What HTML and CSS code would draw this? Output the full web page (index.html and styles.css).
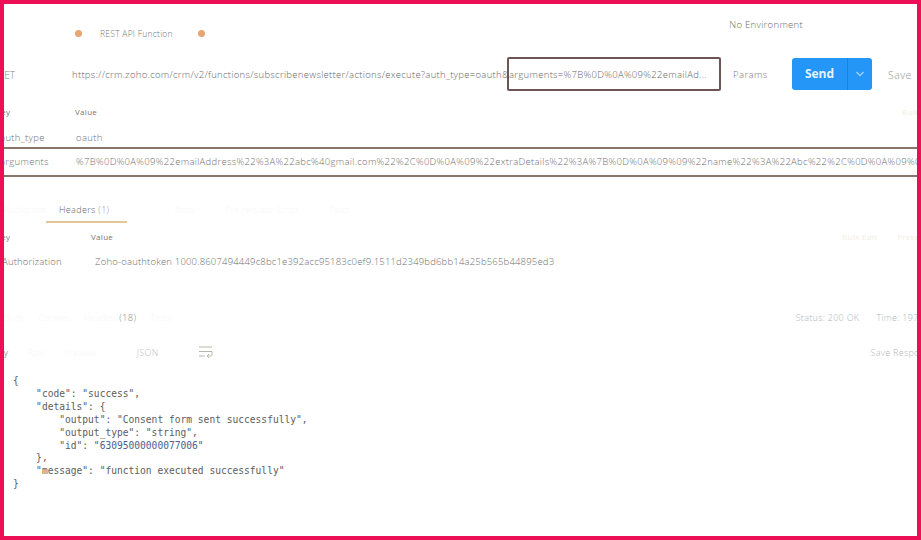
FILE: index.html
```html
<!DOCTYPE html>
<html lang="en">
<head>
<meta charset="utf-8">
<title>REST API Function</title>
<link rel="stylesheet" href="styles.css">
</head>
<body>
<div class="frame">
  <header class="top">
    <div class="tabs">
      <span class="dot"></span><span class="tab-name">REST API Function</span>
      <span class="dot dot-second"></span>
    </div>
    <div class="env">No Environment</div>
  </header>

  <section class="request">
    <span class="method">GET</span>
    <div class="url">https://crm.zoho.com/crm/v2/functions/subscribenewsletter/actions/execute?auth_type=oauth&amp;arguments=%7B%0D%0A%09%22emailAd...<span class="url-mark"></span></div>
    <span class="params">Params</span>
    <div class="send"><span class="send-label">Send</span><span class="send-more"><svg width="10" height="6" viewBox="0 0 10 6"><path d="M1.5 1 5 4.5 8.5 1" fill="none" stroke="#9fd0ff" stroke-width="1.4"/></svg></span></div>
    <span class="save">Save</span>
  </section>

  <div class="kv-head params-head"><span class="k">Key</span><span>Value</span><span class="aside bulk-one">Bulk Edit</span></div>
  <div class="kv-row row-auth"><span class="k">auth_type</span><span>oauth</span></div>
  <div class="kv-row row-args"><span class="k">arguments</span><span class="nowrap">%7B%0D%0A%09%22emailAddress%22%3A%22abc%40gmail.com%22%2C%0D%0A%09%22extraDetails%22%3A%7B%0D%0A%09%09%22name%22%3A%22Abc%22%2C%0D%0A%09%09%22</span></div>

  <nav class="subtabs">
    <span class="faint">Authorization</span>
    <span class="subtab">Headers <span class="count">(1)</span></span>
    <span class="faint">Body</span>
    <span class="faint">Pre-request Script</span>
    <span class="faint">Tests</span>
  </nav>

  <div class="kv-head headers-head"><span class="k">Key</span><span>Value</span><span class="aside">Bulk Edit</span><span class="aside presets">Presets</span></div>
  <div class="kv-row headers-row"><span class="k">Authorization</span><span>Zoho-oauthtoken 1000.8607494449c8bc1e392acc95183c0ef9.1511d2349bd6bb14a25b565b44895ed3</span></div>

  <div class="resp-tabs">
    <span class="faint resp-body">Body</span><span class="faint">Cookies</span><span class="faint">Headers</span><span class="resp-count">(18)</span><span class="faint">Tests</span>
    <div class="status"><span>Status: 200 OK</span><span>Time: 197 ms</span></div>
  </div>

  <div class="resp-tools">
    <span class="pretty">Pretty</span><span class="faint">Raw</span><span class="faint">Preview</span><span class="format">JSON</span>
    <svg class="wrap-icon" width="15" height="12" viewBox="0 0 15 12"><path d="M1 1h13M1 5.500h13M1 10h6M14 5.500v3a1.500 1.500 0 0 1-1.500 1.500H9.500M11 8l-2 2 2 2" fill="none" stroke="#b9b5a8" stroke-width="1"/></svg>
    <span class="save-resp">Save Response</span>
  </div>

  <pre class="json">{
    "code": "success",
    "details": {
        "output": "Consent form sent successfully",
        "output_type": "string",
        "id": "<span class="num">63095000000077006</span>"
    },
    "message": "function executed successfully"
}</pre>
</div>
</body>
</html>
```

FILE: styles.css
```css
* { box-sizing: border-box; }
html, body { margin: 0; padding: 0; background: #fff; }
body { font-family: "Open Sans", "Liberation Sans", sans-serif; font-weight: 300; font-size: 9.5px; color: #6f6f6f; }
.frame { width: 921px; height: 540px; border: 4px solid #ed0f55; overflow: hidden; background: #fff; }
.top { height: 48px; display: flex; justify-content: space-between; }
.tabs { display: flex; align-items: center; height: 24px; margin-top: 17px; padding-left: 71px; font-size: 8.5px; }
.dot { width: 7px; height: 7px; border-radius: 50%; background: #e8a56f; }
.tab-name { margin-left: 18px; color: #777; letter-spacing: .25px; }
.dot-second { margin-left: 25px; }
.env { margin: 14px 114px 0 0; font-size: 9.5px; line-height: 14px; letter-spacing: .3px; color: #6a6a6a; }
.request { height: 44px; display: flex; align-items: center; padding-bottom: 1px; }
.method { width: 68px; margin-left: -7px; padding-top: 2px; flex: none; font-size: 10px; color: #888; }
.url { position: relative; width: 661px; margin-left: 7px; padding-top: 2px; flex: none; font-size: 9.5px; letter-spacing: .3px; line-height: 33px; white-space: nowrap; color: #666; }
.url-mark { position: absolute; left: 435px; top: 1px; width: 214px; height: 34px; border: 2px solid #6e5555; border-radius: 2px; }
.params { width: 59px; padding-top: 2px; flex: none; font-size: 9.5px; letter-spacing: .4px; color: #777; }
.send { width: 80px; height: 32px; flex: none; display: flex; background: #2496f7; border-radius: 3px; color: #fff; }
.send-label { width: 55px; text-align: center; line-height: 32px; font-size: 12px; font-weight: 700; color: #e6f3ff; }
.send-more { flex: 1; display: flex; align-items: center; justify-content: center; border-left: 1px solid #1b82dd; }
.save { margin-left: 16px; padding-top: 2px; font-size: 10.5px; letter-spacing: .5px; color: #999; }
.kv-head { display: flex; font-size: 8px; font-weight: 400; line-height: 12px; letter-spacing: .3px; color: #777; }
.kv-head .k, .kv-row .k { flex: none; }
.params-head { height: 27px; padding-top: 10px; }
.params-head .k { width: 79px; margin-left: -8px; }
.kv-row { display: flex; font-size: 9.5px; white-space: nowrap; }
.row-auth { height: 26px; padding-top: 8px; letter-spacing: .35px; border-bottom: 2px solid #8b7468; line-height: 14px; }
.row-auth .k { width: 76px; margin-left: -4px; }
.row-args { height: 28px; border-bottom: 2px solid #8b7468; line-height: 25px; letter-spacing: .3px; overflow: hidden; }
.row-args .k { margin-left: -4px; width: 76px; }
.nowrap { white-space: nowrap; }
.aside { margin-left: auto; color: #f1eedf; }
.bulk-one { margin-right: -20px; }
.subtabs { height: 49px; padding-top: 26px; display: flex; }
.subtabs span { line-height: 14px; }
.faint { color: #f8f8f8; font-size: 9px; }
.subtabs .faint:first-child { width: 42px; overflow: hidden; }
.subtab { width: 81px; height: 20px; padding-left: 13px; border-bottom: 2px solid #e3c797; font-size: 9px; letter-spacing: .35px; color: #666; margin-right: 48px; }
.count { color: #999; }
.subtabs .faint + .faint { margin-left: 30px; }
.headers-head { height: 26px; padding-top: 5px; }
.headers-head .k { width: 95px; margin-left: -8px; }
.presets { margin-left: 20px; margin-right: -10px; }
.headers-row { height: 51px; padding-top: 3px; line-height: 14px; letter-spacing: .18px; }
.headers-row .k { margin-left: -2px; width: 93px; }
.resp-tabs { height: 28px; display: flex; align-items: center; gap: 14px; font-size: 9px; }
.resp-count { margin-left: -13px; color: #7d9090; font-size: 9.5px; letter-spacing: .25px; }
.status { margin-left: auto; margin-right: -17px; display: flex; gap: 17px; color: #aab6b6; font-size: 9px; letter-spacing: .3px; }
.resp-tools { height: 34px; display: flex; align-items: center; gap: 20px; padding-top: 8px; }
.pretty { margin-left: -20px; color: #666; font-size: 9px; }
.format { margin-left: 21px; color: #bbb; font-size: 9px; letter-spacing: .3px; }
.wrap-icon { flex: none; margin-left: 19px; }
.save-resp { margin-left: auto; margin-right: -18px; color: #b5b5b5; font-size: 9px; letter-spacing: .3px; }
.json { margin: 0; padding: 10px 0 0 9px; font-family: "DejaVu Sans Mono", "Liberation Mono", monospace; font-weight: 400; font-size: 9.6px; line-height: 12.9px; color: #5d5d5d; }
.num { color: #4a5f8f; }
```
